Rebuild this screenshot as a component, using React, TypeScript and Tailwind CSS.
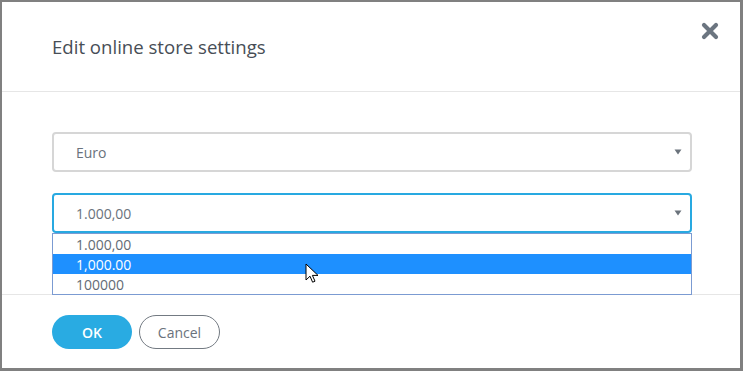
const formats = ["1.000,00", "1,000.00", "100000"];

function Caret() {
  return (
    <svg width="8" height="6" viewBox="0 0 8 6" className="shrink-0">
      <path d="M0.5 0.5h7L4 5.5z" fill="#6b737c" />
    </svg>
  );
}

function SelectBox({ value, active }: { value: string; active?: boolean }) {
  return (
    <div
      className={`flex h-[40px] w-[640px] items-center justify-between rounded-[4px] border-2 pl-[22px] pr-[8px] ${
        active ? "border-[#28a9e1]" : "border-[#d6d6d6]"
      }`}
    >
      <span className="text-[14px] text-[#6a727c]">{value}</span>
      <Caret />
    </div>
  );
}

export default function App() {
  return (
    <div
      className="relative flex h-[371px] w-[743px] flex-col border-b-[3px] border-l-2 border-r-[3px] border-t-2 border-[#808080] bg-white"
      style={{ fontFamily: '"Open Sans", "Liberation Sans", sans-serif' }}
    >
      <div className="flex h-[90px] items-center border-b border-[#e6e6e6] pl-[50px]">
        <h1 className="text-[18.6px] text-[#474e56]">Edit online store settings</h1>
      </div>
      <button className="absolute right-[21px] top-[20px] p-0">
        <svg width="18" height="18" viewBox="0 0 18 18">
          <path d="M3 3L15 15M15 3L3 15" stroke="#6b7580" strokeWidth="4.2" strokeLinecap="round" />
        </svg>
      </button>

      <div className="relative h-[202px] pl-[50px] pt-[40px]">
        <SelectBox value="Euro" />
        <div className="mt-[21px] relative">
          <SelectBox value="1.000,00" active />
          <ul className="absolute left-0 top-[40px] z-10 w-[640px] border border-[#7b9bd2] bg-white">
            {formats.map((f) => (
              <li
                key={f}
                className={`flex h-[20px] items-center pl-[23px] text-[14px] ${
                  f === "1,000.00" ? "bg-[#1e90ff] text-white" : "text-[#636b75]"
                }`}
              >
                {f}
              </li>
            ))}
          </ul>
        </div>
      </div>

      <div className="flex gap-[7px] border-t border-[#e6e6e6] pl-[50px] pt-[20px]">
        <button className="h-[34px] w-[80px] rounded-full bg-[#29abe2] text-[14px] font-semibold text-white">
          OK
        </button>
        <button className="h-[34px] w-[81px] rounded-full border border-[#737a82] text-[14px] text-[#6a727c]">
          Cancel
        </button>
      </div>

      <svg
        className="absolute left-[303px] top-[261px] z-20"
        width="14"
        height="22"
        viewBox="0 0 14 22"
      >
        <path
          d="M1 1v16l4-3.8 2.6 6 2.4-1-2.6-5.8h5.6z"
          fill="white"
          stroke="black"
          strokeWidth="1"
          strokeLinejoin="miter"
        />
      </svg>
    </div>
  );
}
